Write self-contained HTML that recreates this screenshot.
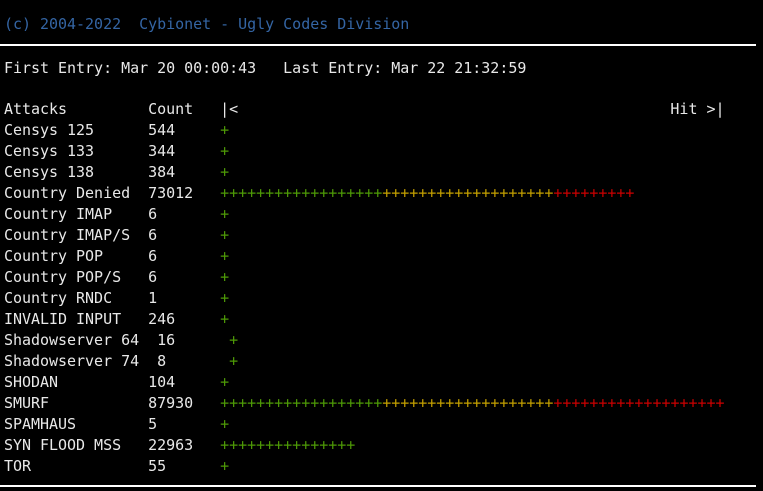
<!DOCTYPE html>
<html><head><meta charset="utf-8"><style>
html,body{margin:0;padding:0;background:#000;width:763px;height:491px;overflow:hidden}
pre{position:absolute;left:4px;margin:0;font-family:"DejaVu Sans Mono","Liberation Mono",monospace;font-size:15px;letter-spacing:-0.025px;line-height:21px;color:#e8e8e8;white-space:pre}
.b{color:#3465a4}.g{color:#4e9a06}.y{color:#c4a000}.r{color:#cc0000}
.hl{position:absolute;left:0;width:756px;height:2px;background:#fff}
</style></head><body>
<pre style="top:14px" class="b">(c) 2004-2022  Cybionet - Ugly Codes Division</pre>
<div class="hl" style="top:44px"></div>
<pre style="top:58px">First Entry: Mar 20 00:00:43   Last Entry: Mar 22 21:32:59</pre>
<pre style="top:99px">Attacks         Count   |&lt;                                                Hit &gt;|
Censys 125      544     <span class="g">+</span>
Censys 133      344     <span class="g">+</span>
Censys 138      384     <span class="g">+</span>
Country Denied  73012   <span class="g">++++++++++++++++++</span><span class="y">+++++++++++++++++++</span><span class="r">+++++++++</span>
Country IMAP    6       <span class="g">+</span>
Country IMAP/S  6       <span class="g">+</span>
Country POP     6       <span class="g">+</span>
Country POP/S   6       <span class="g">+</span>
Country RNDC    1       <span class="g">+</span>
INVALID INPUT   246     <span class="g">+</span>
Shadowserver 64  16      <span class="g">+</span>
Shadowserver 74  8       <span class="g">+</span>
SHODAN          104     <span class="g">+</span>
SMURF           87930   <span class="g">++++++++++++++++++</span><span class="y">+++++++++++++++++++</span><span class="r">+++++++++++++++++++</span>
SPAMHAUS        5       <span class="g">+</span>
SYN FLOOD MSS   22963   <span class="g">+++++++++++++++</span>
TOR             55      <span class="g">+</span></pre>
<div class="hl" style="top:485px"></div>
</body></html>
